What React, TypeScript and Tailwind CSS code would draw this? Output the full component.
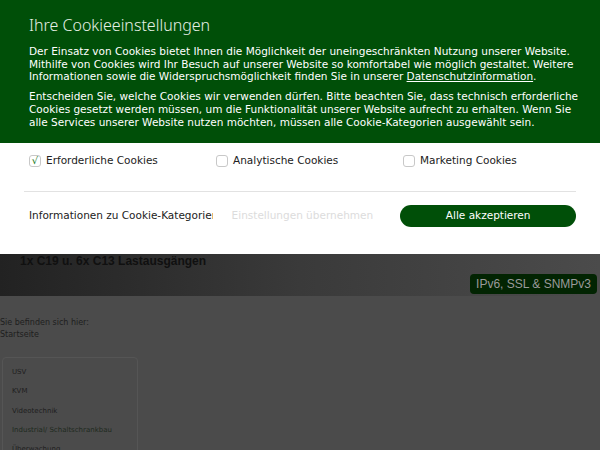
export default function App() {
  const menu = ["USV", "KVM", "Videotechnik", "Industrial/ Schaltschrankbau", "Überwachung"];
  return (
    <div className="w-[600px] h-[450px] overflow-hidden bg-[#4b4b4b] font-['DejaVu_Sans',sans-serif]">
      {/* Cookie banner */}
      <div className="bg-white">
        <div className="bg-[#004f08] text-white pl-[29px] pr-[17px] pt-[13px] h-[143px]">
          <h2 className="text-[16px] font-light leading-[24px] font-['Noto_Sans',sans-serif] text-[#e6f0e6]">Ihre Cookieeinstellungen</h2>
          <p className="text-[10.5px] leading-[12.7px] mt-[8px]">
            Der Einsatz von Cookies bietet Ihnen die Möglichkeit der uneingeschränkten Nutzung unserer Website. Mithilfe von Cookies wird Ihr Besuch auf unserer Website so komfortabel wie möglich gestaltet. Weitere Informationen sowie die Widerspruchsmöglichkeit finden Sie in unserer <span className="underline">Datenschutzinformation</span>.
          </p>
          <p className="text-[10.5px] leading-[12.7px] mt-[7px]">
            Entscheiden Sie, welche Cookies wir verwenden dürfen. Bitte beachten Sie, dass technisch erforderliche Cookies gesetzt werden müssen, um die Funktionalität unserer Website aufrecht zu erhalten. Wenn Sie alle Services unserer Website nutzen möchten, müssen alle Cookie-Kategorien ausgewählt sein.
          </p>
        </div>
        <div className="px-[24px] h-[111px]">
          <div className="flex items-center h-[36px] text-[10.5px] text-[#222]">
            {[
              { label: "Erforderliche Cookies", checked: true, w: "w-[187px]" },
              { label: "Analytische Cookies", checked: false, w: "w-[187px]" },
              { label: "Marketing Cookies", checked: false, w: "" },
            ].map((c) => (
              <div key={c.label} className={`flex items-center gap-[5px] pl-[5px] ${c.w}`}>
                <span className="w-[12px] h-[12px] rounded-[3px] border border-[#c8c8c8] flex items-center justify-center text-[#1a7a1a] text-[10px] leading-none">
                  {c.checked ? "√" : ""}
                </span>
                <span>{c.label}</span>
              </div>
            ))}
          </div>
          <div className="h-[13px] border-b border-[#e2e2e2]" />
          <div className="flex items-center h-[24px] mt-[12px] text-[10.5px]">
            <div className="w-[190px] mr-[3px] pl-[5px] overflow-hidden whitespace-nowrap text-[#222]">Informationen zu Cookie-Kategorien</div>
            <div className="w-[186px] pl-[16px] text-[#dcdcdc]">Einstellungen übernehmen</div>
            <button className="w-[177px] h-[22px] rounded-full bg-[#004f08] text-white text-[10.5px]">Alle akzeptieren</button>
          </div>
        </div>
      </div>

      {/* Dimmed page behind */}
      <div className="h-[42px] bg-gradient-to-r from-[#222] via-[#3a3a3a] to-[#4b4b4b] flex flex-col">
        <div className="pl-[20px] text-[12px] font-bold leading-[14px] text-[#101010] font-['Liberation_Sans',sans-serif]">1x C19 u. 6x C13 Lastausgängen</div>
        <div className="flex justify-end pr-[3px] mt-[6px]">
          <span className="bg-[#022402] text-[#9a9a9a] text-[12px] leading-[20px] px-[6px] rounded-[4px] font-['Liberation_Sans',sans-serif]">IPv6, SSL &amp; SNMPv3</span>
        </div>
      </div>
      <div className="pt-[21px] text-[8px] leading-[11.5px] text-[#1e1e1e]">
        <div>Sie befinden sich hier:</div>
        <div>Startseite</div>
      </div>
      <div className="ml-[2px] mt-[17px] w-[136px] border border-[#555] rounded-[4px] pl-[9px] pt-[5px]">
        {menu.map((m) => (
          <div key={m} className={`text-[7px] leading-[19.3px] ${m.startsWith("Industrial") ? "text-[#1e2a1e]" : "text-[#1e1e1e]"}`}>{m}</div>
        ))}
      </div>
    </div>
  );
}
